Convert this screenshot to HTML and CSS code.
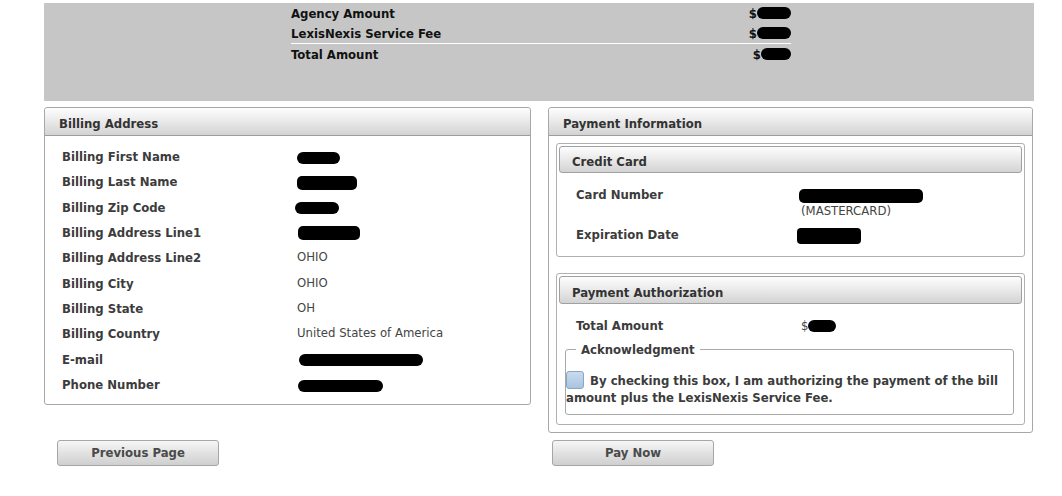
FILE: index.html
```html
<!DOCTYPE html>
<html lang="en">
<head>
    <meta charset="UTF-8">
    <meta name="viewport" content="width=device-width, initial-scale=1.0">
    <title>Payment Review</title>
    <link rel="stylesheet" href="styles.css">
</head>
<body>
    <div class="page">
        <div class="summary">
            <div class="summary-rows">
                <div class="sum-row">
                    <span class="sum-label">Agency Amount</span>
                    <span class="sum-value">$<span class="hide" style="width:34px"></span></span>
                </div>
                <div class="sum-row sum-split">
                    <span class="sum-label">LexisNexis Service Fee</span>
                    <span class="sum-value">$<span class="hide" style="width:34px"></span></span>
                </div>
                <div class="sum-row">
                    <span class="sum-label">Total Amount</span>
                    <span class="sum-value">$<span class="hide" style="width:30px"></span></span>
                </div>
            </div>
        </div>

        <div class="panels">
            <div class="panel billing">
                <div class="panel-head">Billing Address</div>
                <div class="billing-body">
                    <div class="row"><span class="label">Billing First Name</span><span class="value"><span class="hide" style="width:43px"></span></span></div>
                    <div class="row"><span class="label">Billing Last Name</span><span class="value"><span class="hide tall" style="width:60px"></span></span></div>
                    <div class="row"><span class="label">Billing Zip Code</span><span class="value"><span class="hide" style="width:44px;margin-left:-2px"></span></span></div>
                    <div class="row"><span class="label">Billing Address Line1</span><span class="value"><span class="hide tall" style="width:62px;margin-left:1px"></span></span></div>
                    <div class="row"><span class="label">Billing Address Line2</span><span class="value up">OHIO</span></div>
                    <div class="row"><span class="label">Billing City</span><span class="value up">OHIO</span></div>
                    <div class="row"><span class="label">Billing State</span><span class="value up">OH</span></div>
                    <div class="row"><span class="label">Billing Country</span><span class="value up">United States of America</span></div>
                    <div class="row"><span class="label">E-mail</span><span class="value"><span class="hide" style="width:124px;margin-left:2px"></span></span></div>
                    <div class="row"><span class="label">Phone Number</span><span class="value"><span class="hide" style="width:85px;margin-left:1px"></span></span></div>
                </div>
            </div>

            <div class="panel payment">
                <div class="panel-head">Payment Information</div>
                <div class="payment-body">
                    <div class="subpanel">
                        <div class="panel-head sub-head">Credit Card</div>
                        <div class="sub-body">
                            <div class="sub-row">
                                <span class="label">Card Number</span>
                                <span class="value">
                                    <span class="hide tall" style="width:124px"></span><br>
                                    <span class="card-type">(MASTERCARD)</span>
                                </span>
                            </div>
                            <div class="sub-row">
                                <span class="label">Expiration Date</span>
                                <span class="value"><span class="hide big" style="width:64px;margin-left:-2px"></span></span>
                            </div>
                        </div>
                    </div>

                    <div class="subpanel auth">
                        <div class="panel-head sub-head">Payment Authorization</div>
                        <div class="sub-body">
                            <div class="sub-row">
                                <span class="label">Total Amount</span>
                                <span class="value money">$<span class="hide" style="width:28px"></span></span>
                            </div>
                        </div>
                        <fieldset class="ack">
                            <legend>Acknowledgment</legend>
                            <label class="ack-text"><span class="check"></span> By checking this box, I am authorizing the payment of the bill amount plus the LexisNexis Service Fee.</label>
                        </fieldset>
                    </div>
                </div>
            </div>
        </div>

        <div class="actions">
            <div class="action-cell"><button class="btn btn-prev">Previous Page</button></div>
            <div class="action-cell"><button class="btn btn-pay">Pay Now</button></div>
        </div>
    </div>
</body>
</html>
```

FILE: styles.css
```css
body {
    margin: 0;
    background: #fff;
    font-family: "DejaVu Sans Condensed", "DejaVu Sans", sans-serif;
    color: #333;
}
.page {
    width: 990px;
    margin: 3px 0 0 44px;
}

/* summary box */
.summary {
    background: #c6c6c6;
    height: 98px;
}
.summary-rows {
    width: 500px;
    margin-left: 247px;
}
.sum-row {
    display: flex;
    justify-content: space-between;
    align-items: center;
    height: 20px;
    font-size: 13px;
    font-weight: bold;
    color: #111;
}
.sum-split { border-bottom: 1px solid #fff; }
.sum-value {
    display: flex;
    align-items: center;
}

.hide {
    display: inline-block;
    height: 12px;
    background: #000;
    border-radius: 6px;
    vertical-align: middle;
}
.hide.tall { height: 14px; border-radius: 5px; }
.hide.big { height: 16px; border-radius: 4px; }

/* panels */
.panels {
    display: grid;
    grid-template-columns: 487px 485px;
    column-gap: 17px;
    align-items: start;
    margin-top: 6px;
}
.panel {
    border: 1px solid #a8a8a8;
    border-radius: 3px;
    background: #fff;
}
.panel-head {
    height: 27px;
    line-height: 31px;
    padding-left: 14px;
    font-size: 13px;
    font-weight: bold;
    color: #333;
    background: linear-gradient(#fdfdfd, #e9e9e9 50%, #d3d3d3);
    border-bottom: 1px solid #9c9c9c;
    border-radius: 3px 3px 0 0;
}

.billing-body { padding: 8px 0 7px 17px; }
.row {
    display: grid;
    grid-template-columns: 235px 1fr;
    align-items: center;
    height: 25.33px;
}
.label {
    font-size: 13px;
    font-weight: bold;
    color: #3c3c3c;
}
.value {
    font-size: 13px;
    color: #444;
}
.value.up { margin-top: -2px; }

.payment-body { padding: 7px; }
.subpanel {
    border: 1px solid #b0b0b0;
    border-radius: 3px;
    padding: 2px;
}
.subpanel + .subpanel { margin-top: 16px; }
.sub-head {
    border: 1px solid #a0a0a0;
    border-radius: 3px;
    height: 25px;
    line-height: 29px;
    padding-left: 12px;
}
.auth .sub-head { height: 26px; line-height: 31px; }
.sub-body { padding: 14px 0 10px 17px; }
.auth .sub-body { padding-bottom: 0; }
.sub-row {
    display: grid;
    grid-template-columns: 223px 1fr;
    line-height: 16px;
}
.sub-row + .sub-row { margin-top: 8px; }
.card-type { margin-left: 2px; }
.money { margin-left: 2px; display: flex; align-items: center; }

.ack {
    margin: 8px 8px 7px 6px;
    padding: 14px 0 8px 0;
    border: 1px solid #aaa;
    border-radius: 3px;
}
.ack legend {
    margin-left: 10px;
    padding: 0 5px;
    font-size: 13px;
    font-weight: bold;
    color: #3c3c3c;
}
.ack-text {
    display: block;
    font-size: 13px;
    font-weight: bold;
    line-height: 17px;
    color: #3c3c3c;
}
.check {
    display: inline-block;
    width: 16px;
    height: 16px;
    margin-right: 2px;
    vertical-align: -4px;
    border: 1px solid #8aa4c2;
    border-radius: 3px;
    background: linear-gradient(#c9dbee, #a9c4e0);
}

/* buttons */
.actions {
    display: grid;
    grid-template-columns: 487px 485px;
    column-gap: 17px;
    margin-top: 7px;
}
.btn {
    width: 162px;
    height: 26px;
    font-family: "DejaVu Sans Condensed", "DejaVu Sans", sans-serif;
    font-size: 13px;
    font-weight: bold;
    color: #4a4a4a;
    border: 1px solid #a6a6a6;
    border-radius: 3px;
    background: linear-gradient(#f6f6f6, #e2e2e2 50%, #cfcfcf);
}
.btn-prev { margin-left: 13px; }
.btn-pay { margin-left: 4px; }
```
